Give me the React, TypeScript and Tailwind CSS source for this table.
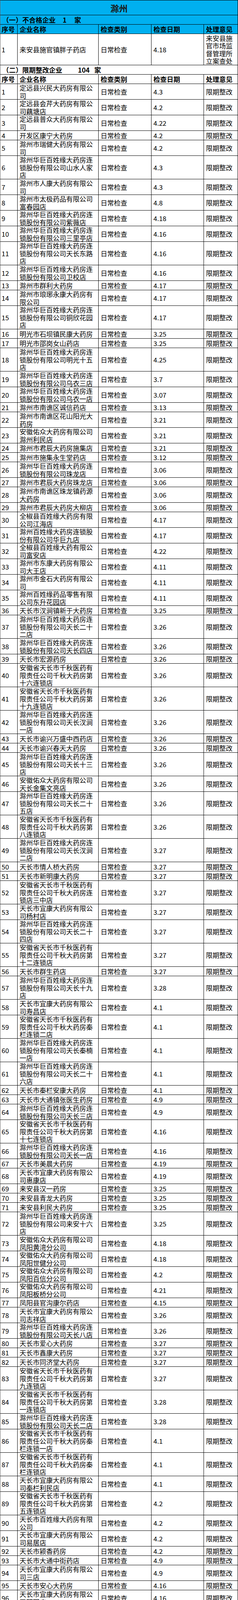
const HJ = "滁州华巨百姓缘大药房连锁股份有限公司";
const QQ = "安徽省天长市千秋医药有限责任公司千秋大药房";
const YZ = "安徽佑众大药房有限公司";
const YK = "天长市宜康大药房有限公司";

const ROWS: [string, string][] = [
  ["定远县兴民大药房有限公司", "4.3"],
  ["定远县会芹大药房有限公司藕塘店", "4.2"],
  ["定远县普众大药房有限公司", "4.22"],
  ["开发区康宁大药房", "4.2"],
  ["滁州市瑞健大药房有限公司", "4.2"],
  [HJ + "山水人家店", "4.3"],
  ["滁州市人康大药房有限公司", "4.3"],
  ["滁州市太极药品有限公司富春园店", "4.8"],
  [HJ + "紫薇店", "4.18"],
  [HJ + "三里亭店", "4.16"],
  [HJ + "天长东路店", "4.16"],
  [HJ + "卫校店", "4.16"],
  ["滁州市群利大药房", "4.17"],
  ["滁州市琅琊永康大药房有限公司", "4.17"],
  [HJ + "铜欣花园店", "4.17"],
  ["明光市石坝镇民康大药房", "3.25"],
  ["明光市邵岗女山药店", "3.25"],
  [HJ + "明光十五店", "4.25"],
  [HJ + "乌衣三店", "3.7"],
  [HJ + "乌衣一店", "3.07"],
  ["滁州市南谯区诚信药店", "3.13"],
  ["滁州市南谯区花山阳光大药房", "3.21"],
  [YZ + "滁州利民店", "3.21"],
  ["滁州市君辰大药房施集店", "3.21"],
  ["滁州市施集永生堂药店", "3.12"],
  [HJ + "珠龙店", "3.06"],
  ["滁州市君辰大药房珠龙店", "3.06"],
  ["滁州市南谯区珠龙镇药源大药房", "3.06"],
  ["滁州市君辰大药房大柳店", "3.06"],
  ["全椒县百姓缘大药房有限公司江海店", "4.17"],
  ["滁州百姓缘大药房连锁股份有限公司华巨九店", "4.17"],
  ["全椒县百姓缘大药有限公司富安店", "4.22"],
  ["滁州市东康大药房有限公司大王店", "4.11"],
  ["滁州市金石大药房有限公司", "4.11"],
  ["滁州百姓缘药品零售有限公司东升花园店", "4.11"],
  ["天长市汊涧镇新于大药房", "3.25"],
  [HJ + "天长二十二店", "3.26"],
  [HJ + "天长四店", "3.26"],
  ["天长市宏源药房", "3.26"],
  [QQ + "第十六连锁店", "3.26"],
  [QQ + "第十九连锁店", "3.26"],
  [HJ + "天长汊涧一店", "3.26"],
  ["天长市谕兴万盛中西药店", "3.26"],
  ["天长市谕兴春天大药房", "3.26"],
  [HJ + "天长十三店", "3.26"],
  [YZ + "天长金集文亮店", "3.26"],
  [HJ + "天长二十五店", "3.26"],
  [QQ + "第八连锁店", "3.26"],
  [HJ + "天长汊涧二店", "3.27"],
  ["天长市情人桥大药房", "3.27"],
  ["天长市新明康大药房", "3.27"],
  [QQ + "连锁店三中店", "3.27"],
  [YK + "杨村店", "3.27"],
  [HJ + "天长二十四店", "3.27"],
  [QQ + "第十二连锁店", "3.27"],
  ["天长市群生药店", "3.27"],
  [HJ + "天长十九店", "3.28"],
  [YK + "寿昌店", "4.1"],
  [QQ + "秦栏连锁二店", "4.1"],
  [HJ + "天长秦楠一店", "4.1"],
  [HJ + "天长二十六店", "4.1"],
  ["天长市秦栏安康大药房", "4.1"],
  ["天长市大通镇张医生药房", "4.9"],
  [HJ + "天长三店", "4.9"],
  [QQ + "第十七连锁店", "4.16"],
  [HJ + "天长一店", "4.16"],
  ["天长市美晨大药房", "4.19"],
  [YK + "惠康店", "4.19"],
  ["来安县汉一药房", "3.25"],
  ["来安县青龙大药房", "3.25"],
  ["来安县利民大药房", "3.25"],
  [HJ + "来安十六店", "3.25"],
  [YZ + "凤阳黄湾分公司", "4.18"],
  [YZ + "凤阳世健分公司", "4.18"],
  [YZ + "凤阳百信分公司", "4.2"],
  [YZ + "凤阳板桥分公司", "4.21"],
  ["凤阳县官沟康尔药店", "4.15"],
  [YK + "志祥店", "3.26"],
  [HJ + "天长八店", "3.26"],
  ["天长市爱心大药房", "3.27"],
  ["天长市鑫康大药房", "3.27"],
  ["天长市同济堂大药房", "3.27"],
  [QQ + "第九连锁店", "3.27"],
  [QQ + "第一连锁店", "3.28"],
  [HJ + "天长二店", "3.28"],
  [QQ + "秦栏连锁一店", "4.1"],
  [QQ + "秦栏连锁店", "4.1"],
  [YK + "秦栏利民店", "4.1"],
  [QQ + "第五连锁店", "4.2"],
  ["天长市百姓缘大药房有限公司", "4.2"],
  [YK + "易居店", "4.2"],
  ["天长市颍香药房", "4.2"],
  ["天长市大通中街药店", "4.9"],
  [YK + "三店", "4.9"],
  ["天长市安心大药房", "4.16"],
  [YK + "明园店", "4.16"],
  [QQ + "第十七连锁店", "4.16"],
  ["天长市炳辉大药房二店", "4.17"],
  ["天长市炳辉大药房三店", "4.17"],
  [HJ + "天长十四店", "4.17"],
  ["天长市和善大药房", "4.17"],
  [YK + "望湖公馆店", "4.18"],
  ["天长市瑞康大药房", "4.18"],
  ["天长市济众大药房", "4.19"],
];

// row height follows line count, like the spreadsheet it came from
const HEIGHT: Record<number, string> = {
  1: "h-[24px]",
  2: "h-[40px]",
  3: "h-[60px]",
  4: "h-[80px]",
};

const GRID = "grid grid-cols-[45px_207px_135px_134px_87px]";
const CELL = "flex items-center border-r border-b border-black pl-[5px]";
const FIRST = "flex items-center border-r border-b border-l border-black border-l-[#666] pl-[3px]";

function chunk(s: string, n: number) {
  const out: string[] = [];
  for (let i = 0; i < s.length; i += n) out.push(s.slice(i, i + n));
  return out;
}

function Lines({ lines }: { lines: string[] }) {
  return (
    <div className="flex flex-col">
      {lines.map((l, i) => (
        <span key={i} className="whitespace-nowrap leading-[19.5px]">
          {l}
        </span>
      ))}
    </div>
  );
}

function HeaderRow({ blue }: { blue?: boolean }) {
  const labels = ["企业名称", "检查类别", "检查日期", "处理意见"];
  return (
    <div className={`${GRID} h-[24px] font-bold ${blue ? "bg-[#00b0f0]" : "bg-white"}`}>
      <div className={FIRST}>序号</div>
      {labels.map((l) => (
        <div key={l} className={CELL}>
          {l}
        </div>
      ))}
    </div>
  );
}

function DataRow({
  seq,
  name,
  date,
  result,
}: {
  seq: number;
  name: string;
  date: string;
  result: string;
}) {
  const nameLines = chunk(name, 11);
  const resultLines = chunk(result, 4);
  const n = Math.max(nameLines.length, resultLines.length);
  return (
    <div className={`${GRID} ${HEIGHT[n]}`}>
      <div className={FIRST}>{seq}</div>
      <div className={CELL}>
        <Lines lines={nameLines} />
      </div>
      <div className={CELL}>日常检查</div>
      <div className={CELL}>{date}</div>
      <div className={CELL}>
        <Lines lines={resultLines} />
      </div>
    </div>
  );
}

export default function App() {
  return (
    <div className="w-[608px] bg-white text-[17px] leading-[20px] text-black font-['Noto_Sans_CJK_SC',sans-serif]">
      <div className="flex h-[39px] items-center justify-center border border-black border-l-[#666] bg-[#00b0f0] text-[22px] font-bold text-[#1a1a1a]">
        滁州
      </div>
      <div className="flex h-[24px] items-center border-x border-b border-black border-l-[#666] bg-[#00b0f0] pl-[5px] font-bold">
        <span>（一）不合格企业</span>
        <span className="ml-[18px]">1</span>
        <span className="ml-[20px]">家</span>
      </div>
      <HeaderRow blue />
      <DataRow seq={1} name="来安县施官镇胖子药店" date="4.18" result="来安县施官市场监督管理所立案查处" />
      <div className="flex h-[24px] items-center border-x border-b border-black border-l-[#666] pl-[5px] font-bold">
        <span>（二）限期整改企业</span>
        <span className="ml-[40px]">104</span>
        <span className="ml-[12px]">家</span>
      </div>
      <HeaderRow />
      {ROWS.map(([name, date], i) => (
        <DataRow key={i} seq={i + 1} name={name} date={date} result="限期整改" />
      ))}
    </div>
  );
}
